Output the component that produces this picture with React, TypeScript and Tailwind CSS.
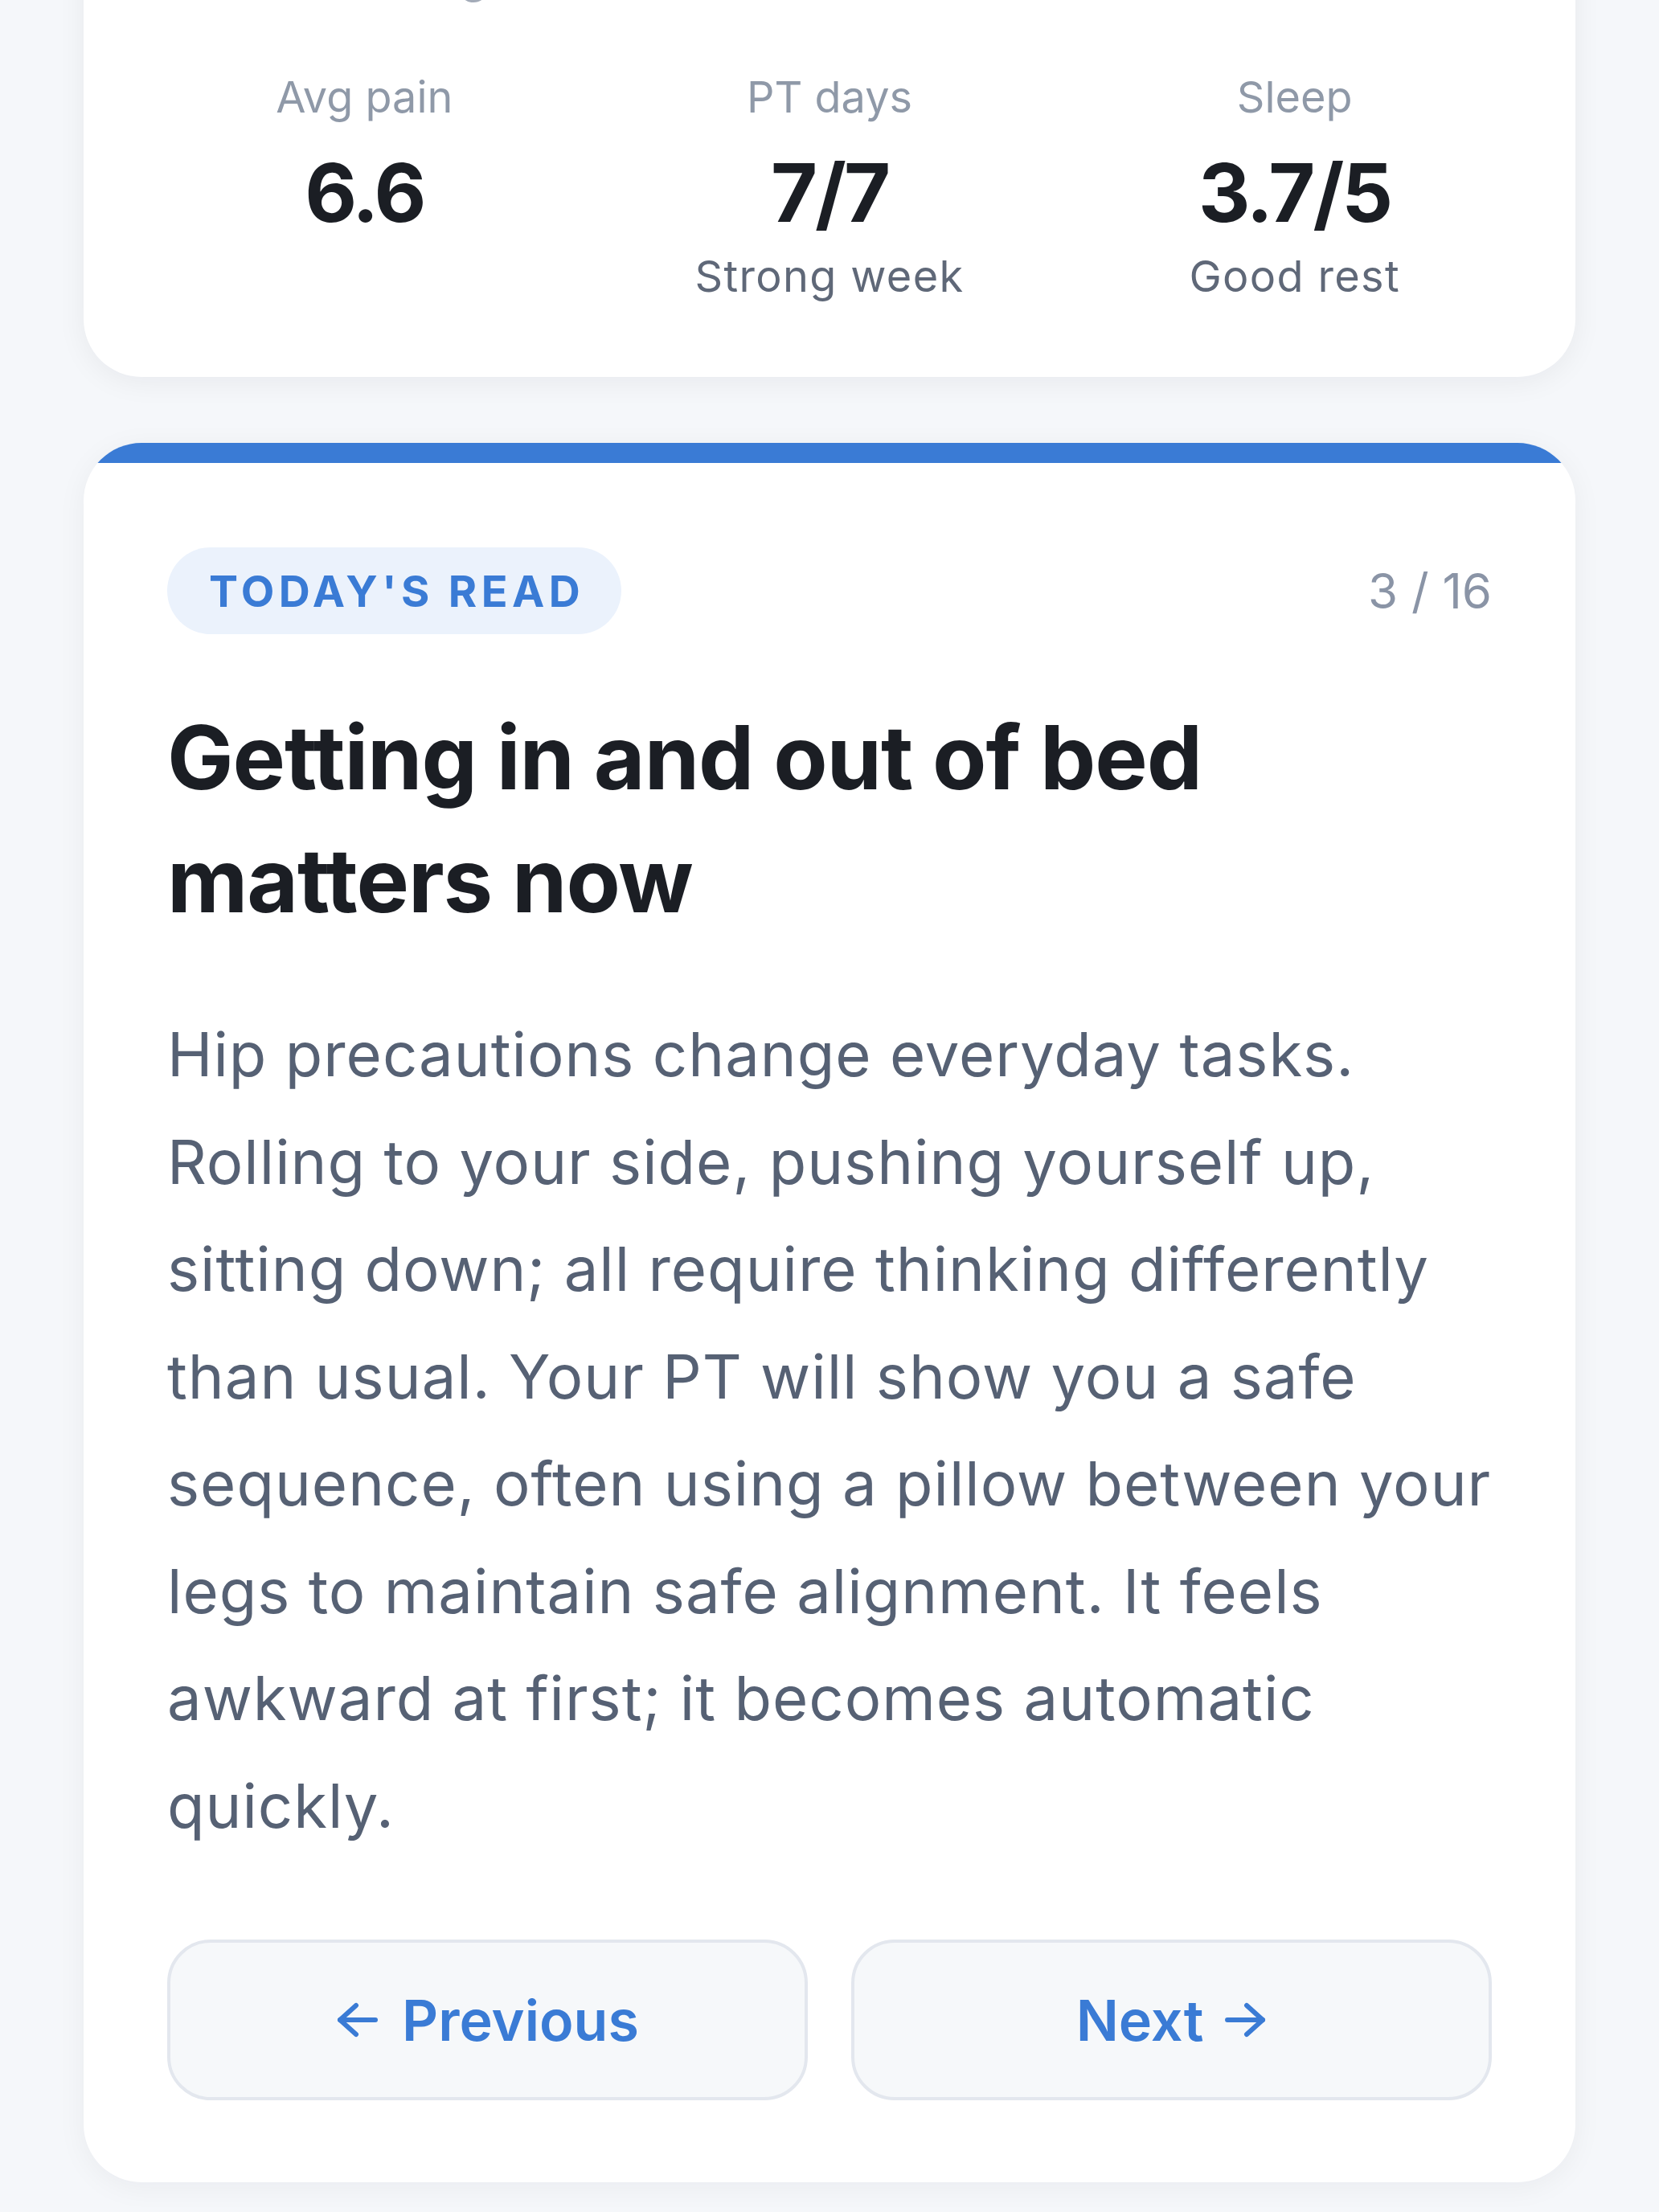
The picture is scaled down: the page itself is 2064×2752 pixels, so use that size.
import React from 'react';

const STATS = [
  { label: 'Avg pain', value: '6.6', note: '' },
  { label: 'PT days', value: '7/7', note: 'Strong week' },
  { label: 'Sleep', value: '3.7/5', note: 'Good rest' },
];

const BODY = [
  'Hip precautions change everyday tasks.',
  'Rolling to your side, pushing yourself up,',
  'sitting down; all require thinking differently',
  'than usual. Your PT will show you a safe',
  'sequence, often using a pillow between your',
  'legs to maintain safe alignment. It feels',
  'awkward at first; it becomes automatic',
  'quickly.',
];

function ArrowLeft() {
  return (
    <svg width="52" height="44" viewBox="0 0 52 44" fill="none" stroke="currentColor" strokeWidth="6" strokeLinecap="round" strokeLinejoin="round">
      <path d="M49 22H5" />
      <path d="M25 4 5 22l20 18" />
    </svg>
  );
}

function ArrowRight() {
  return (
    <svg width="52" height="44" viewBox="0 0 52 44" fill="none" stroke="currentColor" strokeWidth="6" strokeLinecap="round" strokeLinejoin="round">
      <path d="M3 22h44" />
      <path d="M27 4l20 18-20 18" />
    </svg>
  );
}

export default function App() {
  return (
    <main
      className="min-h-screen bg-[#f5f7fa] px-[104px] pb-[38px]"
      style={{ fontFamily: 'Inter, "Noto Sans", sans-serif' }}
    >
      {/* Weekly summary */}
      <section className="-mt-[129px] rounded-[72px] bg-white px-[60px] pt-[60px] pb-[87px] shadow-[0_6px_36px_rgba(15,23,42,0.06)]">
        <p className="text-[56px] leading-[80px] font-medium text-[#a3abb8]">Your week at a glance</p>
        <div className="mt-[72px] grid grid-cols-3 text-center">
          {STATS.map((s) => (
            <div key={s.label} className="flex flex-col items-center">
              <span className="text-[54px] leading-[76px] text-[#8f99a8]">{s.label}</span>
              <span className="mt-[21px] text-[100px] leading-[120px] font-bold tracking-[-0.03em] text-[#1b1e24]">
                {s.value}
              </span>
              {s.note && (
                <span className="mt-[6px] text-[54px] leading-[76px] tracking-[0.025em] text-[#5f6878]">{s.note}</span>
              )}
            </div>
          ))}
        </div>
      </section>

      {/* Today's read */}
      <section className="mt-[82px] overflow-hidden rounded-[72px] bg-white shadow-[0_6px_36px_rgba(15,23,42,0.05)]">
        <div className="h-[25px] bg-[#3a7bd5]" />
        <div className="px-[104px] pt-[105px] pb-[102px]">
          <div className="flex items-center justify-between">
            <span className="flex h-[108px] items-center rounded-full bg-[#ebf2fc] pl-[52px] pr-[46px] text-[54px] font-bold tracking-[0.1em] text-[#3a7bd5]">
              TODAY'S READ
            </span>
            <span className="text-[60px] text-[#8a94a6]">3 / 16</span>
          </div>

          <h1 className="mt-[77px] text-[110px] leading-[153px] font-bold tracking-[-0.01em] text-[#1b1e24]">
            Getting in and out of bed
            <br />
            matters now
          </h1>

          <p className="mt-[73px] text-[76px] leading-[133.5px] tracking-[0.013em] text-[#566174]">
            {BODY.map((line, i) => (
              <React.Fragment key={i}>
                {line}
                {i < BODY.length - 1 && <br />}
              </React.Fragment>
            ))}
          </p>

          <div className="mt-[100px] grid grid-cols-2 gap-[54px]">
            <button className="flex h-[200px] items-center justify-center gap-[30px] rounded-[54px] border-[4px] border-[#e3e7ee] bg-[#f6f8fa] text-[70px] font-semibold text-[#3a7bd5]">
              <ArrowLeft />
              Previous
            </button>
            <button className="flex h-[200px] items-center justify-center gap-[27px] rounded-[54px] border-[4px] border-[#e3e7ee] bg-[#f6f8fa] text-[70px] font-semibold text-[#3a7bd5]">
              Next
              <ArrowRight />
            </button>
          </div>
        </div>
      </section>
    </main>
  );
}
